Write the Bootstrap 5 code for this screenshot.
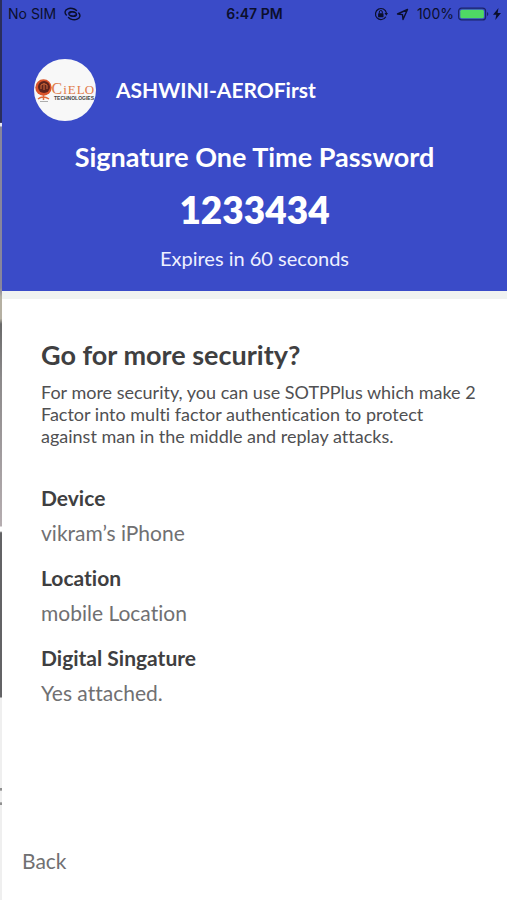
<!DOCTYPE html>
<html lang="en">
<head>
<meta charset="utf-8">
<meta name="viewport" content="width=device-width, initial-scale=1">
<title>Signature One Time Password</title>
<link href="https://cdn.jsdelivr.net/npm/bootstrap@5.3.0/dist/css/bootstrap.min.css" rel="stylesheet">
<style>
body { font-family: Lato, "Open Sans", sans-serif; font-variant-ligatures: none; color: #3f3f41; background: #fff; }
/* sliver of the screen lying under the sheet */
.under-edge { width: 2px; background: linear-gradient(#2a2e5c 0 13.6%, #e6e6f0 13.7% 14%, #87859c 14.1% 32%, #b5b0a2 33% 35.4%, #6a6a6a 36%, #8c8a8b 42%, #b5adb0 58.4%, #fff 58.6% 59%, #636365 59.2% 77.4%, #efefef 77.6% 87.5%, #909090 87.6% 87.8%, #efefef 87.9% 89.1%, #909090 89.2% 89.4%, #efefef 89.5%); }
.otp-header { background: #3a4bc8; border-bottom: 8px solid #f0f2f1; padding-bottom: 19px; }
.status-bar { font-family: Inter, Roboto, sans-serif; font-size: 14px; line-height: 28px; color: #0b0f2c; padding: 0 6px; }
.status-bar .clock { font-weight: 600; }
.identity { padding: 31px 32px 0; gap: 20px; }
.logo { width: 62px; height: 62px; }
.account { font-size: 21px; line-height: 24px; font-weight: 700; }
.otp-title { font-size: 27px; line-height: 32px; font-weight: 700; margin: 20px 0 14px; }
.otp-code { font-size: 37px; line-height: 46px; font-weight: 800; margin-bottom: 11px; }
.expires { font-size: 20px; line-height: 28px; color: #eef0ff; }
.details { padding: 40px 24px 0 39px; }
.details h2 { font-size: 27px; line-height: 32px; font-weight: 700; margin-bottom: 10px; }
.intro { font-size: 18px; line-height: 22px; color: #505052; margin-bottom: 39px; }
.details dt { font-size: 21px; line-height: 24px; font-weight: 700; margin-bottom: 11px; }
.details dd { font-size: 21px; line-height: 24px; color: #707072; margin-bottom: 21px; }
.back { font-size: 21px; line-height: 24px; color: #707072; padding: 0 20px 27px; }
</style>
</head>
<body>
<div class="d-flex min-vh-100">
  <div class="under-edge flex-shrink-0" aria-hidden="true"></div>
  <main class="flex-grow-1 d-flex flex-column">
    <header class="otp-header text-white">
      <div class="status-bar row g-0">
        <div class="col d-flex align-items-center">
          <span>No SIM</span>
          <svg class="ms-2" width="17" height="14" viewBox="0 0 17 14" fill="none" stroke="#0b0f2c" stroke-width="1.4" stroke-linecap="round" role="img" aria-label="Hotspot"><path d="M11.300 8C10.500 9.500 8.500 9.500 6.500 8.700C4.300 7.800 4.300 5.800 6 5C7.500 4.300 9.500 4.800 11 5.400"/><path d="M12.500 3.500C10.500 1.500 6.500.700 3.800 1.800C.700 3 .300 6 2.300 8"/><path d="M6 5.900C7 4.500 9 4.600 10.800 5.300C13 6.200 13 8.200 11.300 9C9.800 9.700 7.800 9.200 6.300 8.600"/><path d="M4.500 10.500C6.500 12.800 10.500 13.300 13.200 12.200C16.300 11 16.700 8 14.700 6"/></svg>
        </div>
        <div class="col-auto clock">6:47 PM</div>
        <div class="col d-flex align-items-center justify-content-end">
          <svg width="14" height="14" viewBox="0 0 14 14" role="img" aria-label="Rotation lock"><path d="M11.800 9.700A5.500 5.500 0 1 1 12.400 6" fill="none" stroke="#0b0f2c" stroke-width="1.200"/><path d="M10.500 6h3.500l-1.700 2.800z" fill="#0b0f2c"/><rect x="4.100" y="6.300" width="5.400" height="4" rx=".6" fill="#0b0f2c"/><path d="M5.300 6.500V5a1.500 1.500 0 0 1 3 0v1.500" fill="none" stroke="#0b0f2c"/></svg>
          <svg class="ms-2" width="13" height="13" viewBox="0 0 13 13" fill="none" stroke="#0b0f2c" stroke-width="1.400" stroke-linejoin="round" role="img" aria-label="Location"><path d="M11.500 1.500L1.500 6L6.500 6.600L7 11.500z"/></svg>
          <span class="ms-2">100%</span>
          <svg class="ms-1" width="31" height="14" viewBox="0 0 31 14" role="img" aria-label="Battery full"><rect x=".6" y="1.100" width="27" height="11.800" rx="3" fill="none" stroke="#1b2468" stroke-width="1.200"/><rect x="2.300" y="2.800" width="23.600" height="8.400" rx="1.500" fill="#4fd964"/><path d="M29 5v4q1.300-.5 1.300-2t-1.300-2" fill="#1b2468"/></svg>
          <svg class="ms-1" width="8" height="12" viewBox="0 0 8 12" role="img" aria-label="Charging"><path d="M5.500 0L0 6.800h3.300L2.300 12L8 4.900H4.600z" fill="#0b0f2c"/></svg>
        </div>
      </div>
      <div class="identity d-flex align-items-center">
        <svg class="logo" viewBox="0 0 62 62" role="img" aria-label="Cielo Technologies"><circle cx="31" cy="31" r="31" fill="#f8f8f8"/><circle cx="9.500" cy="28.500" r="8.200" fill="#d9532b"/><circle cx="10" cy="28" r="6" fill="#5e231d"/><path d="M7 30v-4l3-1.500 3 1.500v4M10 25v6" fill="none" stroke="#d46a3a" stroke-width="1"/><path d="M4 40q5-4 11 0M9.500 36v5" fill="none" stroke="#e0683a" stroke-width="1.500"/><path d="M6 42.500h8" stroke="#999" stroke-width=".8"/><text x="17.500" y="35" font-family="Liberation Serif, serif" fill="#e07a48" font-size="13"><tspan font-size="16">C</tspan><tspan dx="1">i</tspan><tspan dx="1">E</tspan><tspan dx="1">L</tspan><tspan dx="0">O</tspan></text><text x="20" y="40.500" font-family="Liberation Sans, sans-serif" font-weight="700" font-size="5" fill="#444">TECHNOLOGIES</text></svg>
        <span class="account">ASHWINI-AEROFirst</span>
      </div>
      <div class="text-center">
        <h1 class="otp-title">Signature One Time Password</h1>
        <div class="otp-code">1233434</div>
        <div class="expires">Expires in 60 seconds</div>
      </div>
    </header>
    <section class="details flex-grow-1">
      <h2>Go for more security?</h2>
      <p class="intro">For more security, you can use SOTPPlus which make 2 Factor into multi factor authentication to protect against man in the middle and replay attacks.</p>
      <dl class="mb-0">
        <dt>Device</dt><dd>vikram’s iPhone</dd>
        <dt>Location</dt><dd>mobile Location</dd>
        <dt>Digital Singature</dt><dd>Yes attached.</dd>
      </dl>
    </section>
    <footer class="back"><a href="#" class="text-reset text-decoration-none">Back</a></footer>
  </main>
</div>
<script src="https://cdn.jsdelivr.net/npm/bootstrap@5.3.0/dist/js/bootstrap.bundle.min.js"></script>
</body>
</html>
